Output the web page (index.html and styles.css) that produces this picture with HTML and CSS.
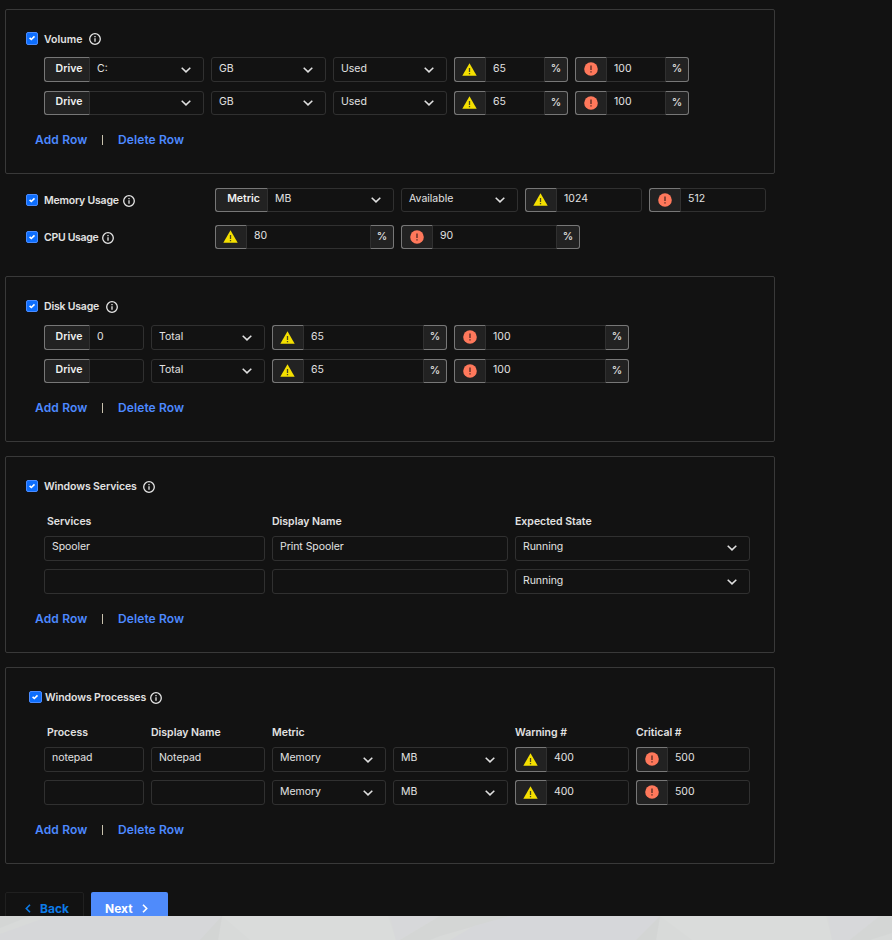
FILE: index.html
```
<!DOCTYPE html>
<html lang="en">
<head>
<meta charset="utf-8">
<title>Monitor settings</title>
<link rel="stylesheet" href="styles.css">
</head>
<body>
<svg class="defs" aria-hidden="true">
  <symbol id="info" viewBox="0 0 12 12"><circle cx="6" cy="6" r="5.3" fill="none" stroke="currentColor" stroke-width="1.3"/><path d="M6 5.2V8.8M6 3V4.3" stroke="currentColor" stroke-width="1.3"/></symbol>
  <symbol id="down" viewBox="0 0 10 6"><path d="M.7.7 5 4.9 9.3.7" fill="none" stroke="currentColor" stroke-width="1.5"/></symbol>
  <symbol id="warn" viewBox="0 0 15 13"><path d="M7.5.3 14.7 12.7H.3Z" fill="#f5e000"/><path d="M7.5 5V9M7.5 10V11.3" stroke="#4a4720" stroke-width="1.3"/></symbol>
  <symbol id="crit" viewBox="0 0 14 14"><circle cx="7" cy="7" r="6.8" fill="#ff785b"/><path d="M7 3.5V8M7 9.2V10.6" stroke="#5d2e25" stroke-width="1.4"/></symbol>
  <symbol id="tick" viewBox="0 0 12 12"><path d="M3.1 5.8 5.2 7.8 9 4" fill="none" stroke="#fff" stroke-width="1.9"/></symbol>
</svg>
<main class="page">
  <section class="panel volume">
    <div class="title"><span class="check"><svg><use href="#tick"/></svg></span><span class="label">Volume</span><svg class="info"><use href="#info"/></svg></div>
    <div class="rows">
      <div class="row">
        <div class="field"><span class="addon name">Drive</span><span class="value">C:</span><svg class="down"><use href="#down"/></svg></div>
        <div class="field"><span class="value">GB</span><svg class="down"><use href="#down"/></svg></div>
        <div class="field"><span class="value">Used</span><svg class="down"><use href="#down"/></svg></div>
        <div class="field"><span class="addon icon"><svg class="warn"><use href="#warn"/></svg></span><span class="value">65</span><span class="addon unit">%</span></div>
        <div class="field"><span class="addon icon"><svg class="crit"><use href="#crit"/></svg></span><span class="value">100</span><span class="addon unit">%</span></div>
      </div>
      <div class="row short">
        <div class="field"><span class="addon name">Drive</span><span class="value"></span><svg class="down"><use href="#down"/></svg></div>
        <div class="field"><span class="value">GB</span><svg class="down"><use href="#down"/></svg></div>
        <div class="field"><span class="value">Used</span><svg class="down"><use href="#down"/></svg></div>
        <div class="field"><span class="addon icon"><svg class="warn"><use href="#warn"/></svg></span><span class="value">65</span><span class="addon unit">%</span></div>
        <div class="field"><span class="addon icon"><svg class="crit"><use href="#crit"/></svg></span><span class="value">100</span><span class="addon unit">%</span></div>
      </div>
    </div>
    <div class="links"><a>Add Row</a><i></i><a>Delete Row</a></div>
  </section>

  <section class="usage">
    <div class="line memory">
      <div class="title"><span class="check"><svg><use href="#tick"/></svg></span><span class="label">Memory Usage</span><svg class="info"><use href="#info"/></svg></div>
      <div class="row short">
        <div class="field"><span class="addon name metric">Metric</span><span class="value">MB</span><svg class="down"><use href="#down"/></svg></div>
        <div class="field"><span class="value">Available</span><svg class="down"><use href="#down"/></svg></div>
        <div class="field"><span class="addon icon"><svg class="warn"><use href="#warn"/></svg></span><span class="value">1024</span></div>
        <div class="field"><span class="addon icon"><svg class="crit"><use href="#crit"/></svg></span><span class="value">512</span></div>
      </div>
    </div>
    <div class="line cpu">
      <div class="title"><span class="check"><svg><use href="#tick"/></svg></span><span class="label">CPU Usage</span><svg class="info"><use href="#info"/></svg></div>
      <div class="row short">
        <div class="field"><span class="addon icon"><svg class="warn"><use href="#warn"/></svg></span><span class="value">80</span><span class="addon unit">%</span></div>
        <div class="field"><span class="addon icon"><svg class="crit"><use href="#crit"/></svg></span><span class="value">90</span><span class="addon unit">%</span></div>
      </div>
    </div>
  </section>

  <section class="panel disk">
    <div class="title"><span class="check"><svg><use href="#tick"/></svg></span><span class="label">Disk Usage</span><svg class="info"><use href="#info"/></svg></div>
    <div class="rows">
      <div class="row">
        <div class="field"><span class="addon name">Drive</span><span class="value">0</span></div>
        <div class="field"><span class="value">Total</span><svg class="down"><use href="#down"/></svg></div>
        <div class="field"><span class="addon icon"><svg class="warn"><use href="#warn"/></svg></span><span class="value">65</span><span class="addon unit">%</span></div>
        <div class="field"><span class="addon icon"><svg class="crit"><use href="#crit"/></svg></span><span class="value">100</span><span class="addon unit">%</span></div>
      </div>
      <div class="row short">
        <div class="field"><span class="addon name">Drive</span><span class="value"></span></div>
        <div class="field"><span class="value">Total</span><svg class="down"><use href="#down"/></svg></div>
        <div class="field"><span class="addon icon"><svg class="warn"><use href="#warn"/></svg></span><span class="value">65</span><span class="addon unit">%</span></div>
        <div class="field"><span class="addon icon"><svg class="crit"><use href="#crit"/></svg></span><span class="value">100</span><span class="addon unit">%</span></div>
      </div>
    </div>
    <div class="links"><a>Add Row</a><i></i><a>Delete Row</a></div>
  </section>

  <section class="panel services">
    <div class="title"><span class="check"><svg><use href="#tick"/></svg></span><span class="label">Windows Services</span><svg class="info"><use href="#info"/></svg></div>
    <div class="row heads"><span>Services</span><span>Display Name</span><span>Expected State</span></div>
    <div class="rows">
      <div class="row">
        <div class="field"><span class="value">Spooler</span></div>
        <div class="field"><span class="value">Print Spooler</span></div>
        <div class="field"><span class="value">Running</span><svg class="down"><use href="#down"/></svg></div>
      </div>
      <div class="row low">
        <div class="field"><span class="value"></span></div>
        <div class="field"><span class="value"></span></div>
        <div class="field"><span class="value">Running</span><svg class="down"><use href="#down"/></svg></div>
      </div>
    </div>
    <div class="links"><a>Add Row</a><i></i><a>Delete Row</a></div>
  </section>

  <section class="panel processes">
    <div class="title"><span class="check"><svg><use href="#tick"/></svg></span><span class="label">Windows Processes</span><svg class="info"><use href="#info"/></svg></div>
    <div class="row heads"><span>Process</span><span>Display Name</span><span>Metric</span><span></span><span>Warning #</span><span>Critical #</span></div>
    <div class="rows">
      <div class="row">
        <div class="field"><span class="value">notepad</span></div>
        <div class="field"><span class="value">Notepad</span></div>
        <div class="field"><span class="value">Memory</span><svg class="down"><use href="#down"/></svg></div>
        <div class="field"><span class="value">MB</span><svg class="down"><use href="#down"/></svg></div>
        <div class="field"><span class="addon icon"><svg class="warn"><use href="#warn"/></svg></span><span class="value">400</span></div>
        <div class="field"><span class="addon icon"><svg class="crit"><use href="#crit"/></svg></span><span class="value">500</span></div>
      </div>
      <div class="row low">
        <div class="field"><span class="value"></span></div>
        <div class="field"><span class="value"></span></div>
        <div class="field"><span class="value">Memory</span><svg class="down"><use href="#down"/></svg></div>
        <div class="field"><span class="value">MB</span><svg class="down"><use href="#down"/></svg></div>
        <div class="field"><span class="addon icon"><svg class="warn"><use href="#warn"/></svg></span><span class="value">400</span></div>
        <div class="field"><span class="addon icon"><svg class="crit"><use href="#crit"/></svg></span><span class="value">500</span></div>
      </div>
    </div>
    <div class="links"><a>Add Row</a><i></i><a>Delete Row</a></div>
  </section>

  <div class="actions">
    <div class="btn back"><svg viewBox="0 0 6 9"><path d="M5 .8 1.3 4.5 5 8.2"/></svg><span>Back</span></div>
    <div class="btn next"><span>Next</span><svg viewBox="0 0 6 9"><path d="M1 .8 4.7 4.5 1 8.2"/></svg></div>
  </div>
</main>
<footer class="backdrop">
  <svg viewBox="0 0 892 24" preserveAspectRatio="none">
    <path d="M0 0H30L0 12Z" fill="#d4d6d5"/>
    <path d="M50 0H222L218 24H0V18Z" fill="#d6d7d9"/>
    <path d="M200 24 222 0 218 24Z" fill="#d3d5d4"/>
    <path d="M222 0H388L396 24H250Z" fill="#dadcdb"/>
    <path d="M390 0H440L400 24H396Z" fill="#d7d8da"/>
    <path d="M440 0H510L440 20 430 24H400Z" fill="#d4d6d5"/>
    <path d="M510 0H660L656 24H450L474 10Z" fill="#d6d7da"/>
    <path d="M636 24 660 0 656 24Z" fill="#d3d5d4"/>
    <path d="M660 0H826L832 24H692Z" fill="#dadcdb"/>
    <path d="M828 0H880L850 24H832Z" fill="#d7d8da"/>
    <path d="M880 0H892V17L870 24H850Z" fill="#d4d6d5"/>
  </svg>
</footer>
</body>
</html>
```
FILE: styles.css
```
* { box-sizing: border-box; }
body { margin: 0; background: #d8dad9; color: #e2e2e2; font: 500 10.5px/14px Inter, "Liberation Sans", sans-serif; }
svg { display: block; flex: none; }
.defs { display: none; }
.page { height: 916px; padding: 9px 0 0 5px; overflow: hidden; background: #121212; }

.panel { width: 770px; border: 1px solid #393939; border-radius: 2px; padding: 22px 0 0 20px; }
.volume { height: 165px; }
.disk { height: 166px; }
.services { height: 197px; margin-top: 14px; }
.processes { height: 197px; margin-top: 14px; }

.title { display: flex; align-items: center; height: 14px; font-weight: 600; white-space: nowrap; }
.check { width: 12px; height: 12px; margin-right: 6px; border: 1px solid #4b8cff; border-radius: 2px; background: #0d6efd; flex: none; }
.volume .check { height: 13px; margin-bottom: 1px; }
.check svg { width: 10px; height: 10px; }
.label { padding-top: 1px; letter-spacing: -0.1px; }
.info { width: 12px; height: 12px; margin-top: 1px; color: #e6e6e6; }
.volume .label { width: 45px; letter-spacing: 0.05px; }
.volume .info { margin-top: 0; }
.memory .label { width: 79px; letter-spacing: -0.2px; }
.cpu .label { width: 58px; letter-spacing: -0.3px; }
.disk .label { width: 62px; padding-top: 2px; letter-spacing: -0.2px; }
.services .label { width: 99px; }
.processes .label { width: 105px; }
.processes .title { padding-left: 3px; }
.processes .check { width: 13px; margin-right: 3px; }

.rows { display: flex; flex-direction: column; gap: 9px; margin-left: 18px; }
.volume .rows { margin-top: 11px; }
.disk .rows { margin-top: 12px; }
.services .rows, .processes .rows { gap: 8px; }
.row { display: grid; gap: 7px; height: 25px; }
.short { height: 24px; }
.volume .row { grid-template-columns: 160px 115px 114px 114px 114px; }
.memory .row { grid-template-columns: 179px 117px 117px 117px; }
.cpu .row { grid-template-columns: 179px 179px; }
.disk .row { grid-template-columns: 100px 114px 175px 175px; }
.services .row { grid-template-columns: 221px 236px 235px; }
.processes .row { grid-template-columns: 100px 114px 114px 115px 114px 114px; }

.heads.row { height: 14px; margin: 22px 0 7px 18px; font-weight: 600; }
.heads span:first-child { padding-left: 3px; }

.field { display: flex; align-items: center; border: 1px solid #303030; border-radius: 3px; }
.value { flex: 1; padding: 0 0 2px 7px; min-width: 0; font-weight: 400; }
.short .value { padding-bottom: 3px; }
.services .value, .processes .value { padding-bottom: 3px; letter-spacing: -0.05px; }
.services .low .value, .processes .low .value { padding-bottom: 1px; }
.down { width: 10px; height: 6px; margin-right: 12px; color: #e0e0e0; }
.services .down { margin-bottom: 1px; }
.low .down { margin-top: 1px; }
.services .low .down { margin-bottom: 0; }
.addon { display: flex; align-items: center; justify-content: center; align-self: stretch; margin: -1px 0 -1px -1px; border: 1px solid #777; border-right-color: #303030; border-radius: 3px 0 0 3px; background: #222; flex: none; }
.name { width: 46px; padding: 0 0 2px 4px; font-weight: 600; color: #f0f0f0; }
.metric { width: 53px; }
.icon { width: 32px; padding: 0 1px 1px 0; }
.unit { width: 24px; margin: -1px -1px -1px 0; padding-bottom: 1px; border-color: #777; border-left-color: #303030; border-radius: 0 3px 3px 0; }
.warn { width: 15px; height: 13px; }
.crit { width: 14px; height: 14px; }

.links { display: flex; align-items: center; height: 16px; margin: 17px 0 0 9px; color: #4d89ff; font-size: 12px; font-weight: 600; line-height: 16px; white-space: nowrap; }
.links i { width: 1px; height: 10px; margin: 0 15px 1px 16px; background: #c9c2ae; }
.links a:first-child { width: 51px; letter-spacing: 0.15px; }
.links a:last-child { letter-spacing: 0.1px; }

.usage { height: 102px; padding-top: 14px; }
.line { display: grid; grid-template-columns: 189px 1fr; height: 24px; padding-left: 21px; }
.line .title { height: 24px; }
.line + .line { margin-top: 13px; }

.actions { display: flex; gap: 7px; margin-top: 28px; }
.btn { display: flex; align-items: center; height: 34px; border-radius: 2px; font-size: 12px; font-weight: 700; }
.btn svg { width: 6px; height: 9px; margin-bottom: 1px; fill: none; stroke: currentColor; stroke-width: 1.6; }
.back { width: 79px; gap: 9px; padding-left: 19px; border: 1px solid #202020; color: #0d7be8; }
.next { width: 77px; gap: 9px; padding-left: 14px; background: #4f8bfb; color: #fff; }
.backdrop { height: 24px; overflow: hidden; }
.backdrop svg { width: 892px; height: 24px; }
```
